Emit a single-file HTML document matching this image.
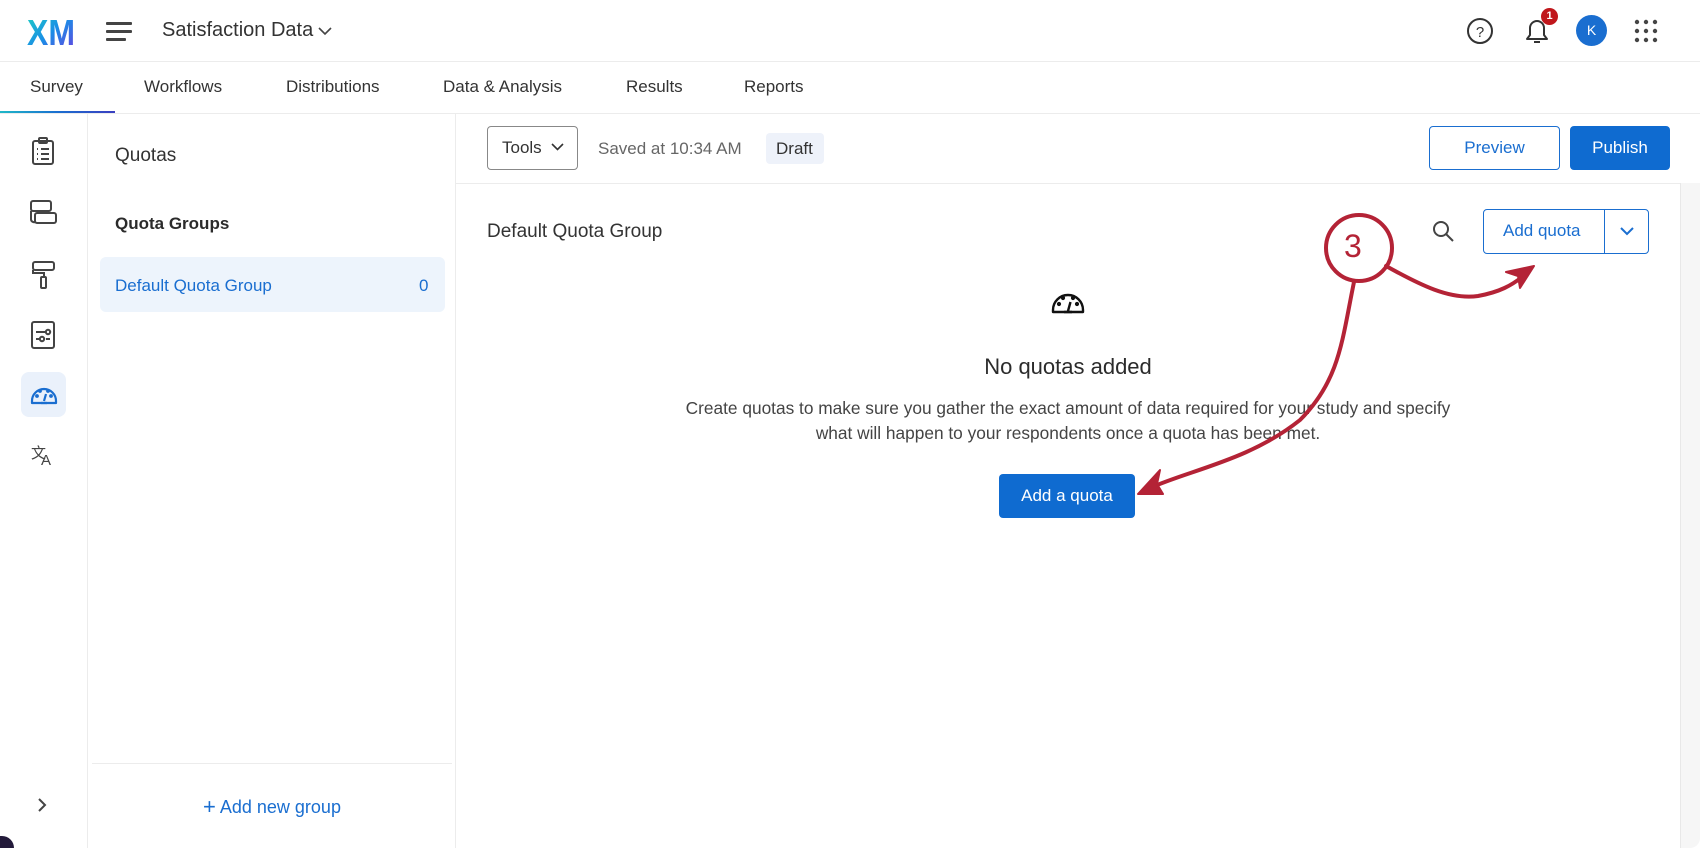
<!DOCTYPE html>
<html><head><meta charset="utf-8"><style>
*{margin:0;padding:0;box-sizing:border-box}
body{width:1700px;height:848px;overflow:hidden;background:#fff;font-family:"Liberation Sans",sans-serif;color:#2b2b2b;position:relative}
.a{position:absolute;white-space:nowrap}
.blue{color:#1a6ed0}
</style></head><body>
<svg class="a" style="left:26px;top:14px" width="54" height="34"><defs><linearGradient id="g" x1="0" x2="1" y1="0" y2="1"><stop offset="0" stop-color="#1fd3c1"/><stop offset=".5" stop-color="#1a8ee6"/><stop offset="1" stop-color="#6a3ee0"/></linearGradient></defs><text x="1" y="31" font-family="Liberation Sans" font-weight="bold" font-size="36" fill="url(#g)" textLength="48" lengthAdjust="spacingAndGlyphs">XM</text></svg>
<div class="a" style="left:106px;top:22px;width:26px;height:3px;background:#444;border-radius:1px"></div>
<div class="a" style="left:106px;top:30px;width:26px;height:3px;background:#444;border-radius:1px"></div>
<div class="a" style="left:106px;top:38px;width:20px;height:3px;background:#444;border-radius:1px"></div>
<div class="a" style="left:162px;top:19px;font-size:20px;color:#333">Satisfaction Data</div>
<svg class="a" style="left:318px;top:26px" width="14" height="10"><path d="M1 2l6 6 6-6" fill="none" stroke="#444" stroke-width="1.6"/></svg>
<svg class="a" style="left:1466px;top:17px" width="28" height="28"><circle cx="14" cy="14" r="12" fill="none" stroke="#333" stroke-width="2"/><text x="14" y="20" font-size="15" text-anchor="middle" font-family="Liberation Sans" fill="#333">?</text></svg>
<svg class="a" style="left:1522px;top:15px" width="30" height="32"><path d="M5 24h20l-3-4v-7a7 7 0 0 0-14 0v7z" fill="none" stroke="#333" stroke-width="2" stroke-linejoin="round"/><path d="M12 27h6" stroke="#333" stroke-width="2"/></svg>
<div class="a" style="left:1541px;top:8px;width:17px;height:17px;border-radius:50%;background:#c0171c;color:#fff;font-size:11px;font-weight:bold;text-align:center;line-height:17px">1</div>
<div class="a" style="left:1576px;top:15px;width:31px;height:31px;border-radius:50%;background:#1a6ed0;color:#fff;font-size:14px;text-align:center;line-height:31px">K</div>
<svg class="a" style="left:1634px;top:19px" width="24" height="24" fill="#444"><circle cx="3" cy="3" r="2.2"/><circle cx="12" cy="3" r="2.2"/><circle cx="21" cy="3" r="2.2"/><circle cx="3" cy="12" r="2.2"/><circle cx="12" cy="12" r="2.2"/><circle cx="21" cy="12" r="2.2"/><circle cx="3" cy="21" r="2.2"/><circle cx="12" cy="21" r="2.2"/><circle cx="21" cy="21" r="2.2"/></svg>
<div class="a" style="left:0;top:61px;width:1700px;height:1px;background:#ececec"></div>
<div class="a" style="top:77px;left:30px;font-size:17px;color:#333">Survey</div>
<div class="a" style="top:77px;left:144px;font-size:17px;color:#333">Workflows</div>
<div class="a" style="top:77px;left:286px;font-size:17px;color:#333">Distributions</div>
<div class="a" style="top:77px;left:443px;font-size:17px;color:#333">Data &amp; Analysis</div>
<div class="a" style="top:77px;left:626px;font-size:17px;color:#333">Results</div>
<div class="a" style="top:77px;left:744px;font-size:17px;color:#333">Reports</div>
<div class="a" style="left:0;top:111px;width:115px;height:3px;background:linear-gradient(90deg,#1fb8c8,#1a6ed0,#3a3fc0)"></div>
<div class="a" style="left:0;top:113px;width:1700px;height:1px;background:#ececec"></div>
<div class="a" style="left:87px;top:114px;width:1px;height:734px;background:#ececec"></div>
<svg class="a" style="left:30px;top:137px" width="26" height="30" fill="none" stroke="#444" stroke-width="2"><rect x="3" y="4" width="20" height="23" rx="2"/><rect x="9" y="1" width="8" height="5" rx="1"/><path d="M7 12h1M11 12h8M7 17h1M11 17h8M7 22h1M11 22h8"/></svg>
<svg class="a" style="left:29px;top:199px" width="30" height="28" fill="none" stroke="#444" stroke-width="2"><rect x="2" y="2" width="20" height="10" rx="2"/><rect x="6" y="14" width="21" height="10" rx="2"/><path d="M2 12v8a3 3 0 0 0 4 3"/></svg>
<svg class="a" style="left:31px;top:260px" width="26" height="30" fill="none" stroke="#444" stroke-width="2"><rect x="2" y="2" width="21" height="8" rx="2"/><path d="M2 10v3h11v4"/><rect x="10" y="17" width="5" height="11" rx="1"/></svg>
<svg class="a" style="left:30px;top:320px" width="26" height="30" fill="none" stroke="#444" stroke-width="2"><rect x="2" y="2" width="22" height="26" rx="2"/><path d="M6 12h10M6 19h4M16 19h4"/><circle cx="18" cy="12" r="2.2"/><circle cx="12" cy="19" r="2.2"/></svg>
<div class="a" style="left:21px;top:372px;width:45px;height:45px;border-radius:8px;background:#eaf1fb"></div>
<svg class="a" style="left:30px;top:382px" width="28" height="24" fill="none" stroke="#1a6ed0" stroke-width="2.2"><path d="M2 19a12 12 0 0 1 24 0v2H2z" stroke-linejoin="round"/><path d="M14 19l2-7M11 21h6"/><circle cx="7" cy="14" r=".8" fill="#1a6ed0"/><circle cx="10" cy="9" r=".8" fill="#1a6ed0"/><circle cx="21" cy="14" r=".8" fill="#1a6ed0"/><circle cx="18" cy="9" r=".8" fill="#1a6ed0"/></svg>
<div class="a" style="left:31px;top:442px;font-size:15px;color:#444">文</div>
<div class="a" style="left:41px;top:452px;font-size:15px;color:#444">A</div>
<svg class="a" style="left:36px;top:797px" width="12" height="16"><path d="M3 2l6 6-6 6" fill="none" stroke="#444" stroke-width="2"/></svg>
<div class="a" style="left:0;top:836px;width:14px;height:12px;background:#231a3a;border-top-right-radius:12px"></div>
<div class="a" style="left:455px;top:114px;width:1px;height:734px;background:#ececec"></div>
<div class="a" style="left:115px;top:145px;font-size:19px;color:#333">Quotas</div>
<div class="a" style="left:115px;top:214px;font-size:17px;font-weight:bold;color:#2b2b2b">Quota Groups</div>
<div class="a" style="left:100px;top:257px;width:345px;height:55px;border-radius:6px;background:#edf4fc"></div>
<div class="a blue" style="left:115px;top:276px;font-size:17px">Default Quota Group</div>
<div class="a blue" style="left:419px;top:276px;font-size:17px">0</div>
<div class="a" style="left:92px;top:763px;width:360px;height:1px;background:#ececec"></div>
<div class="a blue" style="left:203px;top:793px;font-size:18px"><span style="font-size:22px;font-weight:300;position:relative;top:1px">+</span> Add new group</div>
<div class="a" style="left:487px;top:126px;width:91px;height:44px;border:1px solid #888;border-radius:4px"></div>
<div class="a" style="left:502px;top:138px;font-size:17px;color:#333">Tools</div>
<svg class="a" style="left:551px;top:143px" width="13" height="9"><path d="M1 1l5.5 5.5L12 1" fill="none" stroke="#333" stroke-width="1.6"/></svg>
<div class="a" style="left:598px;top:139px;font-size:17px;color:#666">Saved at 10:34 AM</div>
<div class="a" style="left:766px;top:133px;width:58px;height:31px;border-radius:4px;background:#eef2fa"></div>
<div class="a" style="left:776px;top:139px;font-size:17px;color:#333">Draft</div>
<div class="a blue" style="left:1429px;top:126px;width:131px;height:44px;border:1px solid #1a6ed0;border-radius:4px;text-align:center;line-height:42px;font-size:17px">Preview</div>
<div class="a" style="left:1570px;top:126px;width:100px;height:44px;background:#0f6bd0;border-radius:4px;text-align:center;line-height:44px;font-size:17px;color:#fff">Publish</div>
<div class="a" style="left:456px;top:183px;width:1224px;height:1px;background:#ececec"></div>
<div class="a" style="left:1680px;top:183px;width:20px;height:665px;background:#f6f6f6;border-left:1px solid #e8e8e8;border-bottom-right-radius:10px"></div>
<div class="a" style="left:487px;top:221px;font-size:19px;color:#333">Default Quota Group</div>
<svg class="a" style="left:1432px;top:220px" width="24" height="24" fill="none" stroke="#444" stroke-width="2"><circle cx="9" cy="9" r="7"/><path d="M14 14l7 7"/></svg>
<div class="a blue" style="left:1483px;top:209px;width:166px;height:45px;border:1px solid #1a6ed0;border-radius:4px"></div>
<div class="a" style="left:1604px;top:209px;width:1px;height:45px;background:#1a6ed0"></div>
<div class="a blue" style="left:1503px;top:221px;font-size:17px">Add quota</div>
<svg class="a" style="left:1620px;top:227px" width="14" height="9"><path d="M1 1l6 6 6-6" fill="none" stroke="#1a6ed0" stroke-width="2"/></svg>
<svg class="a" style="left:1051px;top:288px" width="34" height="26" fill="none" stroke="#111" stroke-width="2.4"><path d="M2 22a15 15 0 0 1 30 0v2H2z" stroke-linejoin="round"/><path d="M17 23l2.5-9M13 24h8"/><circle cx="8" cy="16" r=".9" fill="#111"/><circle cx="12" cy="10" r=".9" fill="#111"/><circle cx="26" cy="16" r=".9" fill="#111"/><circle cx="22" cy="10" r=".9" fill="#111"/></svg>
<div class="a" style="left:868px;top:354px;width:400px;text-align:center;font-size:22px;color:#2b2b2b">No quotas added</div>
<div class="a" style="left:580px;top:396px;width:976px;text-align:center;font-size:17.3px;line-height:25px;color:#444;white-space:normal">Create quotas to make sure you gather the exact amount of data required for your study and specify<br>what will happen to your respondents once a quota has been met.</div>
<div class="a" style="left:999px;top:474px;width:136px;height:44px;background:#0f6bd0;border-radius:4px;text-align:center;line-height:44px;font-size:17px;color:#fff">Add a quota</div>
<svg class="a" style="left:0;top:0" width="1700" height="848" fill="none" stroke="#b42336" stroke-width="4" stroke-linecap="round">
<circle cx="1359" cy="248" r="33"/>
<path d="M1354 282C1342 340 1340 380 1300 420C1250 460 1190 470 1150 488"/>
<path d="M1138 494l22-24-3 14 6 10z" fill="#b42336" stroke-width="2" stroke-linejoin="round"/>
<path d="M1386 266C1420 285 1450 300 1478 296C1500 292 1512 285 1522 277"/>
<path d="M1534 266l-28 6 12 4 2 12z" fill="#b42336" stroke-width="2" stroke-linejoin="round"/>
</svg>
<div class="a" style="left:1344px;top:228px;font-size:32px;color:#b42336">3</div>
</body></html>
